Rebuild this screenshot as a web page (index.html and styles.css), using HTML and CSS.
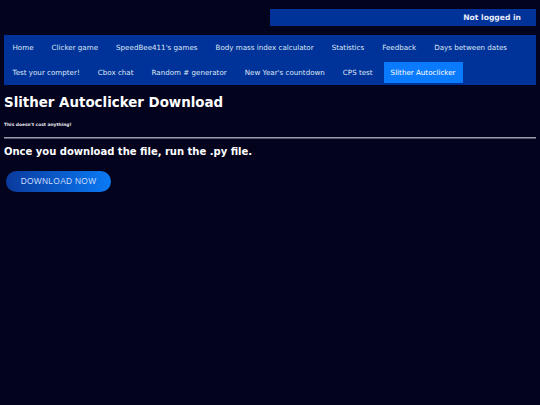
FILE: index.html
```html
<!DOCTYPE html>
<html lang="en">
<head>
<meta charset="utf-8">
<title>Slither Autoclicker Download</title>
<link rel="stylesheet" href="styles.css">
</head>
<body>
<div class="page">
  <div class="topbar"><div class="status">Not logged in</div></div>
  <nav class="nav">
    <a class="nav-item" href="#">Home</a>
    <a class="nav-item" href="#">Clicker game</a>
    <a class="nav-item" href="#">SpeedBee411's games</a>
    <a class="nav-item" href="#">Body mass index calculator</a>
    <a class="nav-item" href="#">Statistics</a>
    <a class="nav-item" href="#">Feedback</a>
    <a class="nav-item" href="#">Days between dates</a>
    <a class="nav-item" href="#">Test your compter!</a>
    <a class="nav-item" href="#">Cbox chat</a>
    <a class="nav-item" href="#">Random # generator</a>
    <a class="nav-item" href="#">New Year's countdown</a>
    <a class="nav-item" href="#">CPS test</a>
    <a class="nav-item active" href="#">Slither Autoclicker</a>
  </nav>
  <main class="content">
    <h1 class="title">Slither Autoclicker Download</h1>
    <p class="note">This doesn't cost anything!</p>
    <hr class="rule">
    <h2 class="subtitle">Once you download the file, run the .py file.</h2>
    <a class="btn" href="#">DOWNLOAD NOW</a>
  </main>
</div>
</body>
</html>
```
FILE: styles.css
```css
html, body {
  margin: 0;
  padding: 0;
  background: #03031e;
}
body {
  font-family: "DejaVu Sans", Verdana, sans-serif;
  color: #ffffff;
}
.page {
  padding: 9px 4px 0 4px;
}
.topbar {
  display: flex;
  justify-content: flex-end;
}
.status {
  width: 50%;
  height: 17px;
  line-height: 17px;
  background: #003399;
  color: #e8ecf8;
  font-weight: bold;
  font-size: 7.6px;
  text-align: right;
  padding-right: 15px;
  box-sizing: border-box;
}
.nav {
  margin-top: 9px;
  background: #003399;
  display: flex;
  flex-wrap: wrap;
  padding: 0;
}
.nav-item {
  display: block;
  margin: 2px 2.5px 2px 1.5px;
  padding: 0 7px;
  height: 21px;
  line-height: 21px;
  font-size: 7.13px;
  color: #dfe6f5;
  text-decoration: none;
  white-space: nowrap;
}
.nav-item.active {
  background: #0a7bff;
  color: #ffffff;
}
.content {
  padding-top: 10px;
}
.title {
  margin: 0;
  font-size: 13.4px;
  line-height: 16px;
  font-weight: bold;
  color: #ffffff;
}
.note {
  margin: 11px 0 0 0;
  font-size: 4.4px;
  line-height: 6px;
  font-weight: bold;
  color: #e8e8f0;
}
.rule {
  margin: 9px 0 0 0;
  border: 0;
  border-top: 1px solid #9a9aa8;
  border-bottom: 1px solid #55556a;
  height: 0;
}
.subtitle {
  margin: 7px 0 0 0;
  font-size: 10px;
  line-height: 12px;
  font-weight: bold;
  color: #ffffff;
}
.btn {
  display: inline-block;
  margin: 13px 0 0 2px;
  width: 105px;
  height: 21px;
  line-height: 21px;
  border-radius: 11px;
  background: linear-gradient(90deg, #0a3a9c 0%, #0a7af5 100%);
  color: #c8dcff;
  font-family: "Liberation Sans", Arial, sans-serif;
  font-size: 8.4px;
  letter-spacing: 0.3px;
  text-align: center;
  text-decoration: none;
}
```
